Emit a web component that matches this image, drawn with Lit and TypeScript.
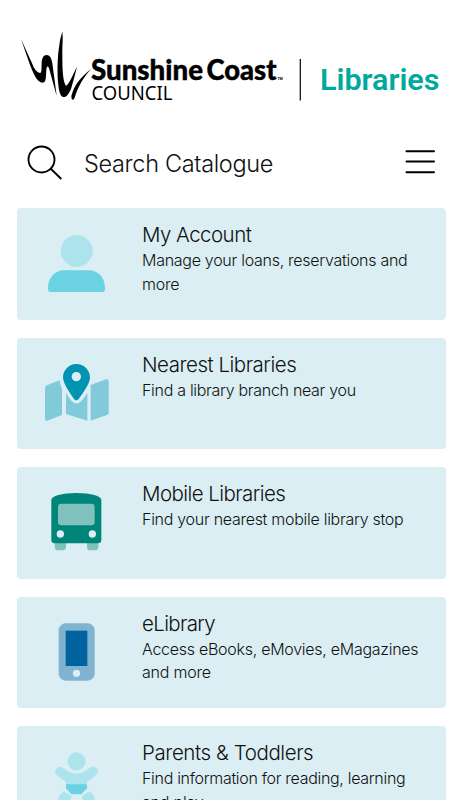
import { LitElement, html, css, svg } from "lit";
import { customElement, property } from "lit/decorators.js";
import { styleMap } from "lit/directives/style-map.js";

const icons: Record<string, unknown> = {
  account: svg`
    <circle cx="200" cy="152" r="48" fill="#ace3ec"/>
    <path d="M162 210H237C265 210 285 234 285 262V266Q285 275 276 275H123Q114 275 114 266V262C114 234 134 210 162 210Z" fill="#6bd2e3"/>`,
  map: svg`
    <path d="M110 165L145 151Q150 149 150 154Q150 165 156 176V254L111 271Q105 272 105 266V172Q106 167 110 165ZM168 188Q177 203 185 212Q199 227 214 212Q223 203 232 188V271L168 251ZM242 164L288 147Q296 145 296 153V247Q296 252 291 254L242 271Z" fill="#80cad9"/>
    <path fill-rule="evenodd" d="M199 101C177 101 159 119 159 141C159 160 180 188 192 206Q199 214 206 206C219 188 240 160 240 141C240 119 222 101 199 101ZM199 125A14 14 0 1 1 199 153A14 14 0 1 1 199 125Z" fill="#0093b2"/>`,
  bus: svg`
    <path d="M134 250H168V262Q168 273 157 273H145Q134 273 134 262ZM231 250H265V262Q265 273 254 273H242Q231 273 231 262Z" fill="#80c1bd"/>
    <path d="M124 122C124 110 155 101 199 101C243 101 274 110 274 122V242Q274 252 264 252H134Q124 252 124 242Z" fill="#00857b"/>
    <rect x="144" y="133" width="110" height="65" rx="10" fill="#80c1bd"/>
    <circle cx="151" cy="224" r="11" fill="#daeef3"/><circle cx="247" cy="224" r="11" fill="#daeef3"/>`,
  phone: svg`
    <rect x="146" y="102" width="108" height="172" rx="21" fill="#80b3d0"/>
    <rect x="167" y="124" width="65" height="106" fill="#00629e"/>
    <circle cx="199.500" cy="252" r="11" fill="#daeef3"/>`,
  baby: svg`
    <g transform="translate(0 3)">
    <circle cx="199.500" cy="126" r="27" fill="#ace3ec"/>
    <path d="M140 147Q150 138 160 146L174 156Q199 171 225 156L239 146Q250 138 260 147Q269 158 258 168L231 187V198H168V187L141 168Q130 158 140 147ZM161 216L183 229L180 262H145V237Q147 227 161 216ZM238 216L216 229L219 262H254V237Q252 227 238 216Z" fill="#ace3ec"/>
    <path d="M168 195H231V207L214 225H184L168 207Z" fill="#6bd2e3"/>
    </g>`,
};

type Line = [text: string, spacing: number];
interface Entry { icon: string; title: Line; lines: Line[]; }

const entries: Entry[] = [
  { icon: "account", title: ["My Account", -0.55], lines: [["Manage your loans, reservations and", -0.28], ["more", -0.25]] },
  { icon: "map", title: ["Nearest Libraries", -0.48], lines: [["Find a library branch near you", -0.3]] },
  { icon: "bus", title: ["Mobile Libraries", -0.56], lines: [["Find your nearest mobile library stop", -0.28]] },
  { icon: "phone", title: ["eLibrary", -0.65], lines: [["Access eBooks, eMovies, eMagazines", -0.27], ["and more", -0.2]] },
  { icon: "baby", title: ["Parents & Toddlers", -0.42], lines: [["Find information for reading, learning", -0.31], ["and play", -0.2]] },
];

@customElement("library-card")
class LibraryCard extends LitElement {
  @property({ attribute: false }) entry!: Entry;

  static styles = css`
    :host { display: flex; height: 111.600px; flex: none; border-radius: 4px; background: #daeef3; color: #111; }
    .icon { width: 120px; height: 112px; flex: none; }
    .copy { padding: 12px 0 0 5px; white-space: nowrap; }
    h2 { margin: 0; font-size: 20.500px; font-weight: 300; line-height: 29px; }
    p { margin: 0; font-size: 16px; line-height: 23.700px; }
  `;

  render() {
    const e = this.entry;
    return html`
      <svg class="icon" viewBox="21 23 360 336">${icons[e.icon]}</svg>
      <div class="copy">
        <h2><span style=${styleMap({ letterSpacing: `${e.title[1]}px` })}>${e.title[0]}</span></h2>
        ${e.lines.map(([t, s]) => html`<p><span style=${styleMap({ letterSpacing: `${s}px` })}>${t}</span></p>`)}
      </div>`;
  }
}

@customElement("app-root")
class AppRoot extends LitElement {
  static styles = css`
    :host { display: flex; flex-direction: column; box-sizing: border-box; width: 463px; height: 800px; overflow: hidden; background: #fff; color: #111; font-family: Inter, "Liberation Sans", sans-serif; font-weight: 300; }
    .logo { display: block; width: 463px; height: 130px; flex: none; }
    .council-bold { font: 900 28.500px Lato, sans-serif; stroke: #000; stroke-width: .4px; }
    .council { font: 400 19.500px "Noto Sans", sans-serif; }
    .tm { font: 700 3.500px "Open Sans", sans-serif; }
    .libraries { font: 600 30px Roboto, sans-serif; }
    .search { display: flex; align-items: center; box-sizing: border-box; height: 78px; flex: none; padding: 0 27px 15px 26px; }
    .glass { width: 38px; height: 38px; }
    .query { flex: 1; padding: 5px 0 0 20px; font-size: 23.500px; line-height: 36px; letter-spacing: -0.330px; white-space: nowrap; }
    .menu { width: 31px; height: 30px; }
    .cards { display: flex; flex-direction: column; gap: 18px; padding: 0 17px; }
  `;

  render() {
    return html`
      <svg class="logo" viewBox="0 0 463 130">
        <g transform="translate(10 20) scale(.33333)">
          <path d="M33 57C48 90 61 119 72 143Q81 158 90 159C96 158 94 145 95 132C95 115 100 105 110 105C121 105 125 117 127 130C130 153 134 180 140 227C133 201 125 173 120 155Q116 137 111 140C107 149 110 173 105 184Q101 191 92 187C78 180 69 157 61 137Q48 101 33 57Z"/>
          <path d="M157 34C160 59 156 83 157 106C157 143 158 185 168 198C179 190 189 162 201 140C195 166 189 185 185 200C178 222 168 233 159 231C149 227 146 207 144 185C142 158 142 119 146 89Q149 59 157 34Z"/>
          <path d="M244 147C222 168 203 202 194 233Q190 243 185 237Q182 228 188 215C198 190 216 167 244 147Z"/>
        </g>
        <text class="council-bold" x="91" y="80" textLength="112" lengthAdjust="spacingAndGlyphs">Sunshine</text>
        <text class="council-bold" x="206.500" y="80" textLength="70" lengthAdjust="spacingAndGlyphs">Coast</text>
        <text class="tm" x="277.500" y="80">TM</text>
        <text class="council" x="91.500" y="99.700" textLength="81" lengthAdjust="spacingAndGlyphs">COUNCIL</text>
        <rect x="299.700" y="59" width="1.200" height="41.500"/>
        <text class="libraries" x="320" y="90.300" fill="#00a99d" textLength="119.500" lengthAdjust="spacingAndGlyphs">Libraries</text>
      </svg>
      <div class="search">
        <svg class="glass" viewBox="26 142 38 38" fill="none" stroke="#000" stroke-width="1.900">
          <circle cx="41.500" cy="158.500" r="13"/><path d="M50.500 167.500L61.300 178"/>
        </svg>
        <div class="query">Search Catalogue</div>
        <svg class="menu" viewBox="405 146 31 30" stroke="#000" stroke-width="2" stroke-linecap="round"><path d="M406.500 150.200H434M406.500 160.600H434M406.500 171.200H434"/></svg>
      </div>
      <div class="cards">${entries.map((e) => html`<library-card .entry=${e}></library-card>`)}</div>`;
  }
}
